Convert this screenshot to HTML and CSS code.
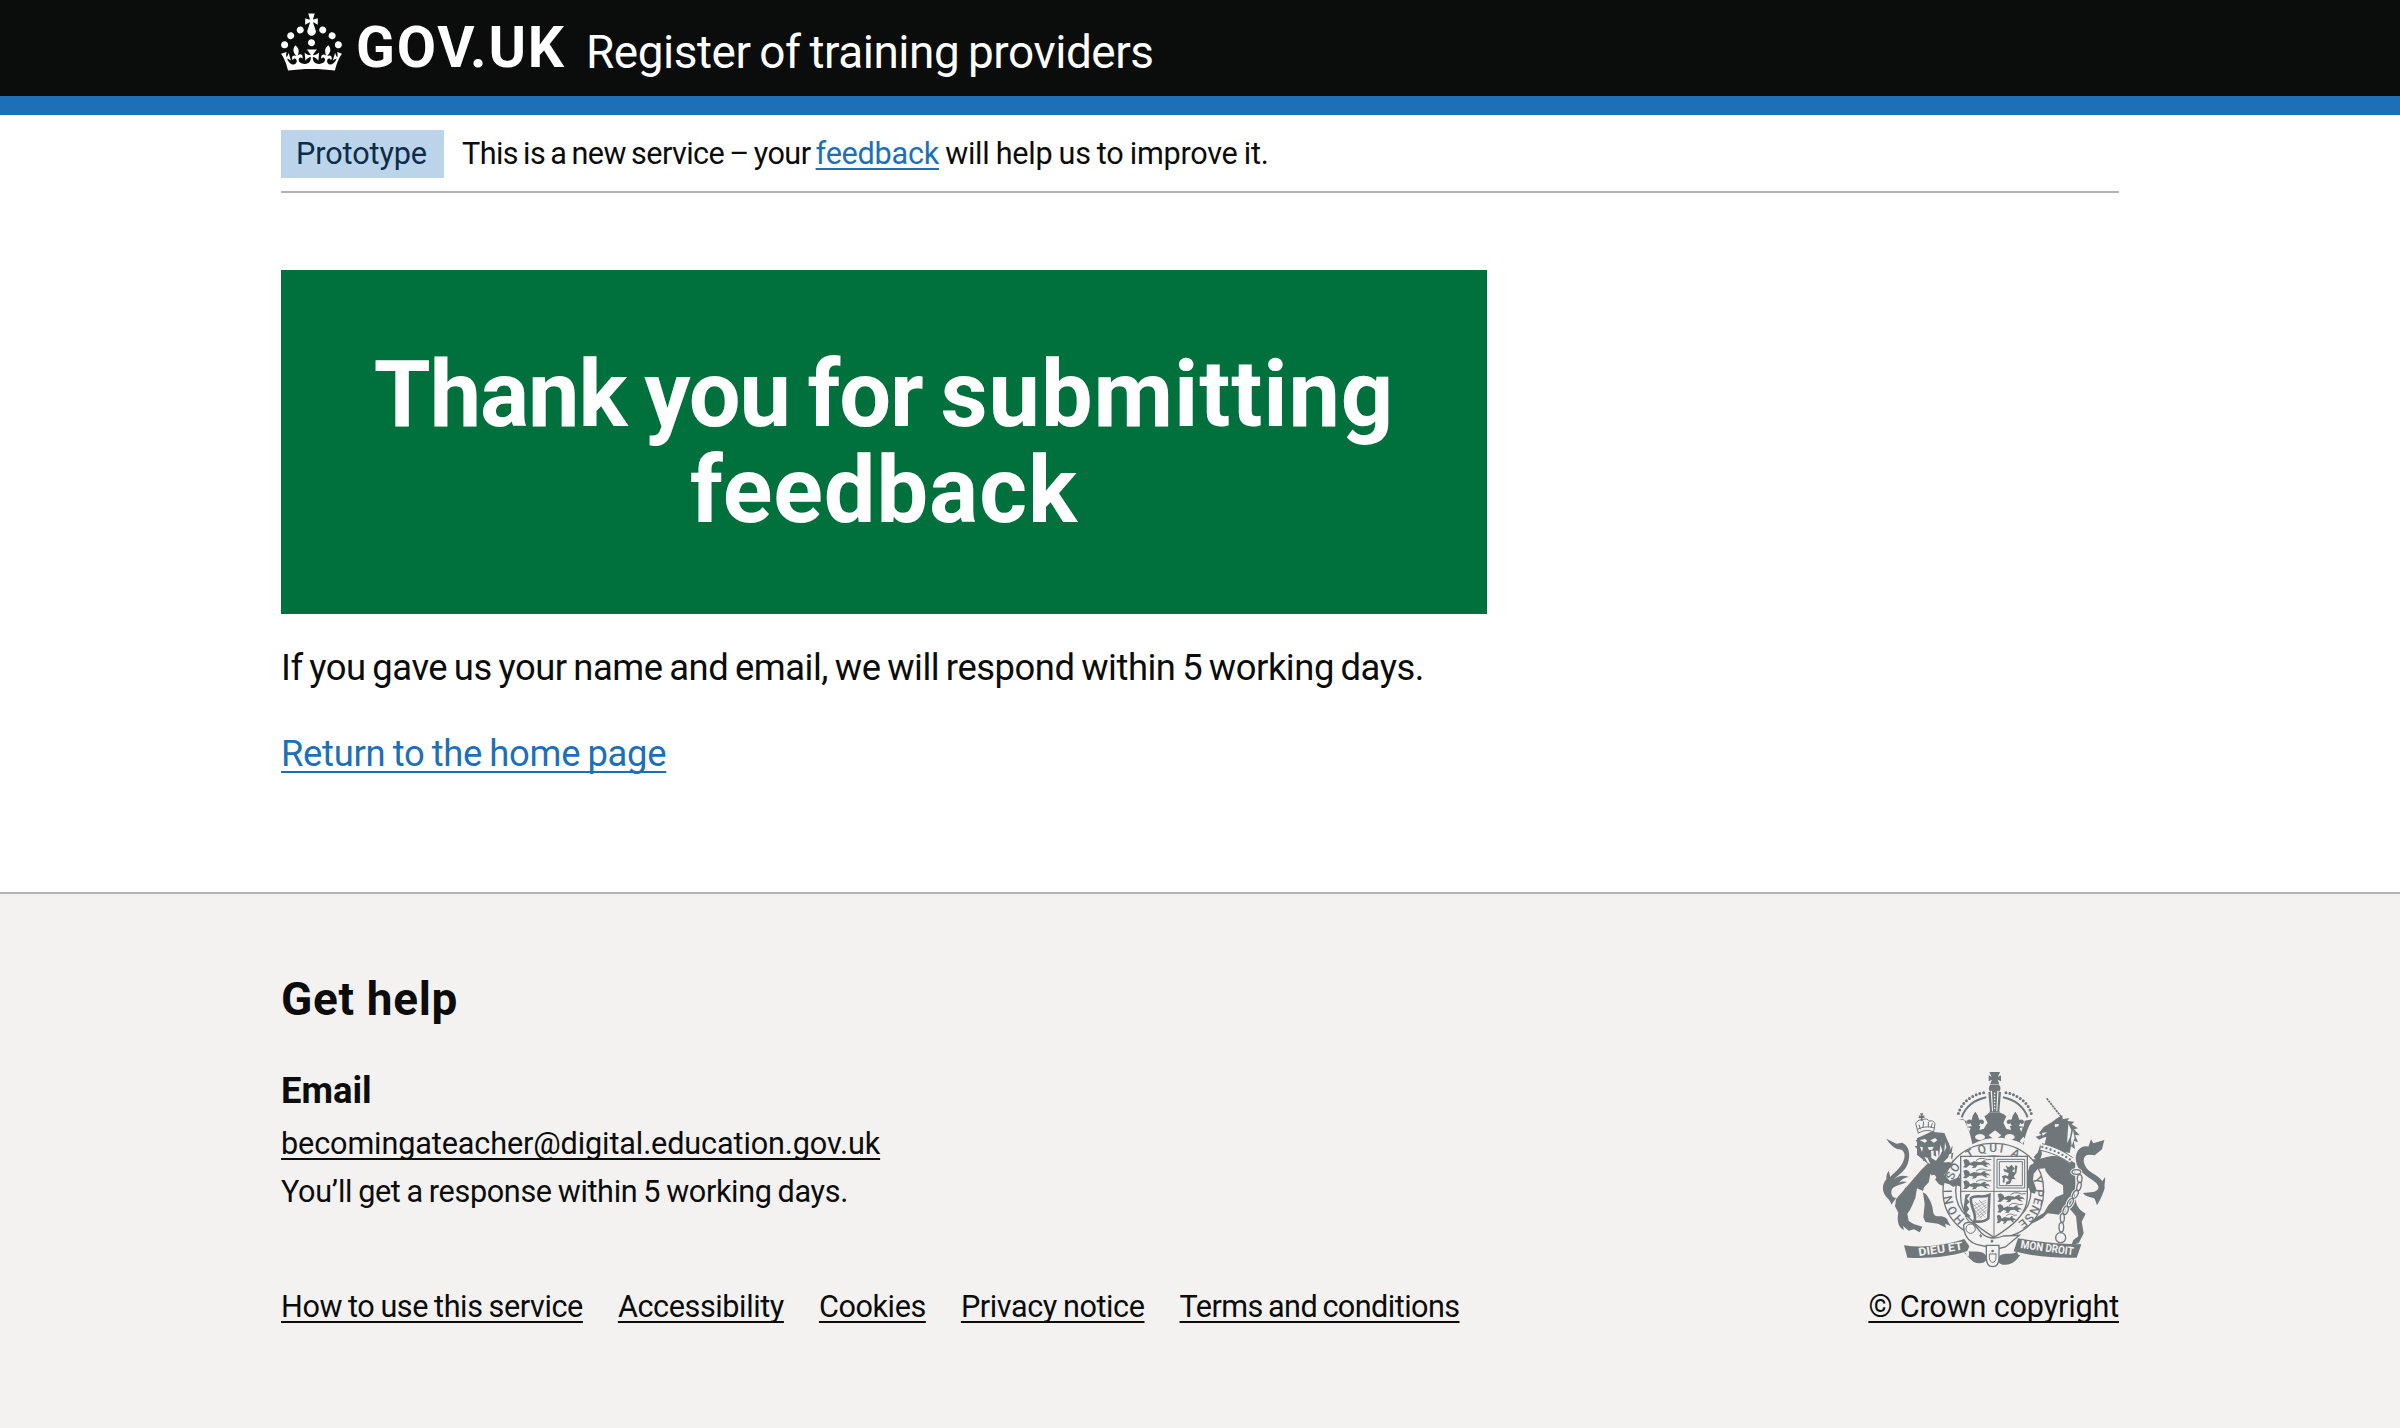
FILE: index.html
```html
<!DOCTYPE html>
<html lang="en">
<head>
<meta charset="utf-8">
<title>Thank you for submitting feedback – Register of training providers</title>
<link rel="stylesheet" href="styles.css">
</head>
<body>
<header class="header">
  <div class="container header__inner">
    <a class="header__logo" href="#">
      <svg class="header__crown" viewBox="0 0 32 30" aria-hidden="true">
        <path d="M22.6 10.4c-1 .4-2-.1-2.4-1-.4-.9.1-2 1-2.4.9-.4 2 .1 2.4 1s-.1 2-1 2.4m-5.9 6.7c-.9.4-2-.1-2.4-1-.4-.9.1-2 1-2.4.9-.4 2 .1 2.4 1s-.1 2-1 2.4m10.8-3.7c-1 .4-2-.1-2.4-1-.4-.9.1-2 1-2.4.9-.4 2 .1 2.4 1s0 2-1 2.4m3.3 4.8c-1 .4-2-.1-2.4-1-.4-.9.1-2 1-2.4.9-.4 2 .1 2.4 1s-.1 2-1 2.4M17 4.7l2.3 1.2V2.5l-2.3.7-.2-.2.9-3h-3.4l.9 3-.2.2c-.1.1-2.3-.7-2.3-.7v3.4L15 4.7c.1.1.1.2.2.2l-1.3 4c-.1.2-.1.4-.1.6 0 1.1.8 2 1.9 2.2h.7c1-.2 1.9-1.1 1.9-2.1 0-.2 0-.4-.1-.6l-1.3-4c-.1-.2 0-.2.1-.3m-7.6 5.7c.9.4 2-.1 2.4-1 .4-.9-.1-2-1-2.4-.9-.4-2 .1-2.4 1s0 2 1 2.4m-5 3c.9.4 2-.1 2.4-1 .4-.9-.1-2-1-2.4-.9-.4-2 .1-2.4 1s.1 2 1 2.4m-3.2 4.8c.9.4 2-.1 2.4-1 .4-.9-.1-2-1-2.4-.9-.4-2 .1-2.4 1s0 2 1 2.4m14.8 11c4.4 0 8.6.3 12.3.8 1.1-4.5 2.4-7 3.7-8.8l-2.5-.9c.2 1.3.3 1.9 0 2.7-.4-.4-.8-1.1-1.1-2.3l-1.2 4c.7-.5 1.3-.8 2-.9-1.1 2.5-2.6 3.1-3.5 3-1.1-.2-1.7-1.2-1.5-2.1.3-1.2 1.5-1.5 2.1-.1 1.1-2.3-.8-3-2-2.3 1.9-1.9 2.1-3.5.6-5.6-2.1 1.6-2.1 3.2-1.2 5.5-1.2-1.4-3.2-.6-2.5 1.6.9-1.4 2.1-.5 1.9.8-.2 1.1-1.7 2.1-3.5 1.9-2.7-.2-2.9-2.1-2.9-3.6.7-.1 1.9.5 2.9 1.9l.4-4.3c-1.1 1.1-2.1 1.4-3.2 1.4.4-1.2 2.1-3 2.1-3h-5.4s1.7 1.9 2.1 3c-1.1 0-2.1-.2-3.2-1.4l.4 4.3c1-1.4 2.2-2 2.9-1.9-.1 1.5-.2 3.4-2.9 3.6-1.9.2-3.4-.8-3.5-1.9-.2-1.3 1-2.2 1.9-.8.7-2.3-1.2-3-2.5-1.6.9-2.2.9-3.9-1.2-5.5-1.5 2-1.3 3.7.6 5.6-1.2-.7-3.1 0-2 2.3.6-1.4 1.8-1.1 2.1.1.2.9-.3 1.9-1.5 2.1-.9.2-2.4-.5-3.5-3 .6 0 1.2.3 2 .9l-1.2-4c-.3 1.1-.7 1.9-1.1 2.3-.3-.8-.2-1.4 0-2.7l-2.9.9C1.3 23 2.6 25.5 3.7 30c3.7-.5 7.9-.8 12.3-.8"/>
      </svg>
      <span class="header__wordmark">GOV.UK</span>
    </a>
    <a class="header__service" href="#">Register of training providers</a>
  </div>
</header>

<div class="container phase-banner">
  <strong class="phase-banner__tag">Prototype</strong>
  <span class="phase-banner__text">This is a new service – your <span class="phase-banner__action"><a class="link" href="#">feedback</a> will help us to improve it.</span></span>
</div>

<main class="container main">
  <div class="panel">
    <h1 class="panel__title">Thank you for <span class="panel__title-end">submitting feedback</span></h1>
  </div>
  <p class="body-text">If you gave us your name and email, we will respond within 5 working days.</p>
  <p class="body-text body-text--return"><a class="link link--return" href="#">Return to the home page</a></p>
</main>

<footer class="footer">
  <div class="container footer__inner">
    <div class="footer__content">
      <h2 class="footer__heading">Get help</h2>
      <h3 class="footer__subheading">Email</h3>
      <ul class="footer__contact">
        <li><a class="footer__link footer__link--email" href="#">becomingateacher@digital.education.gov.uk</a></li>
        <li>You’ll get a response within 5 working days.</li>
      </ul>
      <ul class="footer__nav">
        <li><a class="footer__link" href="#">How to use this service</a></li>
        <li><a class="footer__link" href="#">Accessibility</a></li>
        <li><a class="footer__link" href="#">Cookies</a></li>
        <li><a class="footer__link" href="#">Privacy notice</a></li>
        <li><a class="footer__link footer__link--terms" href="#">Terms and conditions</a></li>
      </ul>
    </div>
    <div class="footer__meta">
      <svg class="arms" viewBox="36 30 678 600" aria-hidden="true">
        <defs>
          <path id="motto" d="M373 510A125 117 0 0 1 248 393A125 117 0 0 1 373 276A125 117 0 0 1 498 393A125 117 0 0 1 373 510"/>
          <g id="passant">
            <path d="M2 3l9-3 8 5 3 7 12-5 20 3 10-6 8 2-6 3 12 3 6 8-7-4-8 2 9 7-10-2-10-6-14 2-5 7-12 1 6-6-12-3-10 8-10-1 5-6z"/>
            <path class="arms__line" d="M40 5c10-9 22-8 34-3l12-1"/>
          </g>
          <g id="fleur"><path d="M0-32c9 10 12 18 6 29 8-10 20-8 20 1 0 6-8 8-11 3-2 9-8 10-12 13v9h-6v-9c-4-3-10-4-12-13-3 5-11 3-11-3 0-9 12-11 20-1-6-11-3-19 6-29z"/></g>
          <g id="chain">
            <ellipse cx="622" cy="336" rx="13" ry="7"/><ellipse cx="632" cy="356" rx="7" ry="12"/><ellipse cx="630" cy="379" rx="6" ry="13" transform="rotate(14 630 379)"/><ellipse cx="619" cy="403" rx="7" ry="13" transform="rotate(30 619 403)"/><ellipse cx="604" cy="428" rx="7" ry="14" transform="rotate(28 604 428)"/><ellipse cx="590" cy="451" rx="7" ry="13" transform="rotate(20 590 451)"/><ellipse cx="580" cy="474" rx="6" ry="13"/><ellipse cx="577" cy="502" rx="7" ry="14"/><circle cx="575" cy="533" r="15"/>
          </g>
        </defs>

        <!-- royal crown -->
        <path d="M361 36h32l-6 15 9-5v18l-10-5 5 14h-28l6-14-10 5V46l9 5zM364 74c-6 6-6 15 0 22h26c6-7 6-16 0-22zM358 96h38l-5 58 4 4h-36l4-4z"/>
        <path class="arms__cut" d="M369 92l-4 0 4 62 3 0zM385 92l4 0-4 62-3 0z"/>
        <path class="arms__dots arms__dots--light" d="M377 100v54"/>
        <path class="arms__dots" d="M344 98c-42 8-70 34-77 68M411 98c42 8 70 34 77 68"/>
        <path class="arms__band" d="M352 112c-38 8-62 28-74 60M402 112c38 8 62 28 74 60"/>
        <path d="M268 178l24 4 3 18 16-2-4-17 12-26 13 26-5 16 20 2 9-10-10-20 12-8h44l10 8-9 20 9 10 19-2-5-16 13-26 13 26-4 17 16 2 3-18 24-4c-14 24-22 44-27 76-46-27-107-27-154-1-6-33-14-52-26-75z"/>
        <path d="M356 159h43l-12 15v18h-18v-18z"/>
        <use href="#fleur" x="319" y="188"/><use href="#fleur" x="439" y="188"/>
        <g class="arms__paper">
          <path d="M378 211l19 15-19 14-19-14zM292 230l11 13-8 9-9-14zM463 230l-11 13 8 9 9-14z"/>
          <ellipse cx="333" cy="231" rx="15" ry="9"/><ellipse cx="422" cy="231" rx="15" ry="9"/>
          <path d="M335 196l17-4-7 14-14 4zM422 196l-17-4 7 14 14 4zM296 202l9 3-5 11zM461 202l-9 3 5 11z"/>
        </g>

        <!-- lion supporter -->
        <path d="M52 236l30 15 18-3c20 9 26 36 16 64-8 22-30 34-42 47 14-14 31-14 46-8-15 1-22 9-31 18 12-7 19-5 24-2-21 9-46 11-46 29 0 14 9 19 15 17l-15 21c-1-12-13-18-21-32-8-17-4-32 6-44 0-12 2-21 8-26 0 10 4 14 3 19 18-18 37-31 43-57 3-12-2-24-14-26-15 0-28-14-40-32z"/>
        <path d="M109 385l48-56 26-25 65 4 5-30c-12 2-22 13-32 21l30-42-5 36 7 13-18 14-17 24 18 24 45-8 17 12-12 13-26-11-28 8-22-9-26-32-4 25-17 18c8 25 26 35 29 68 2 21 14 15 27 17 8 4 16 4 18 15l8 14-17-7 3 12-24-12-38-5-6-14 4-40-6-40-17-7-5 30c-10 21-15 37-24 46l4 22 15 9 26 8-8 17-17-9-16 4-17-14 3 12c-20-9-21-32-17-52l-10-19 3-21c11-16 24-21 32-45z"/>
        <path d="M144 235l42-20 40 4 18 42-6 31-20 20-16-5-22 8-14-13-22-18z"/>
        <path d="M140 240l10 16-13 3 12 13-4 14 16-2 2 20 14-8 10 18 10-20 14 10 4-17 14 8-2-20 14-2-8-14 8-9-13-6 2-14-14 2z"/>
        <g class="arms__paper">
          <path d="M152 240l16-3 7 6-8 5zM184 241l15-7 6 7-10 7zM176 262l18-2-4 9-10 1zM186 272h8v14l8 4-2-18h7l2 18-8 12-14-8zM162 262l-9-2 6 16zM166 290l10 4 8 18-8-4zM214 254l6 18-10 20zM228 246l4 16-6 14z"/>
          <path d="M207 346l-18 26-10-8 12-20zM160 396l4-8 10 6 34 6 3 18-30-10z"/>
        </g>
        <g class="arms__line">
          <path d="M148 220l-8-30c6-10 14-12 20-8 6-8 18-6 20 2 8-4 16 0 18 8l-4 24c-14-7-32-6-46 4zM144 209c16-9 34-11 52-5M150 194l4 14M164 184l-2 18M178 186v16M190 190l-4 14M158 162v20M149 172h17"/>
        </g>
        <path d="M153 160h10l-3 8 6-2v9l-6-2 2 8h-8l2-8-6 2v-9l6 2z"/>

        <!-- unicorn supporter -->
        <path class="arms__horn" d="M533 115l44 56"/>
        <path d="M510 219l14-18 25-15 16-12 15-8 1 12 20-4-6 9 21 2-8 8 19 12-12 3 17 18-14-1 9 22-13-5 4 25-12-8-4 20-13-2 5 14-68-33 6-27-10 2-12 6-10-9 17-5z"/>
        <g class="arms__paper"><path d="M557 193l13-1-2 7-10 3zM598 192l9 18-4 22-9 18 2-30zM612 210l5 24-9 24-2-20zM519 219l16-3-14 11z"/></g>
        <path d="M514 253l-7 24-13 14 16 18 9-28z"/>
        <path d="M525 293c34-11 65-4 94 17-2 32 1 49 0 68l-1 31c3 27 10 40 32 52l-12 24 6 35-15 30-22 5 6-15 15-11-3-22-4-38-31-37-1 26-18 6-35-4-15 14-18 10-18 8 9-15 31-19 13-22 22-24 23-10-1-26c-22-14-38-20-52-43l-4-17-38 2-9 14 11 32-2 20-16-1-5-28 1-38 15-18 30-3z"/>
        <path d="M706 240l-7 28-22 18-14-2c-18-1-24 14-14 34 10 22 38 25 51 46l8-13c2 13-3 20-1 34-8 25-13 33-23 51l-7-20c-11-6-25-4-35-17l31-3c19-5 20-18 5-30-23-18-53-31-57-63-4-28 14-49 37-43l8-22 7 12z"/>
        <path class="arms__collar" d="M516 260c25 6 63 20 92 42"/>
        <path class="arms__line" d="M519 251c30 6 62 20 92 42M515 271c28 6 58 18 88 38"/>
        <path class="arms__dots arms__dots--collar" d="M520 261c27 7 58 19 86 40"/>
        <use class="arms__chain arms__chain--halo" href="#chain"/>
        <use class="arms__chain" href="#chain"/>

        <!-- garter -->
        <path class="arms__garter" fill-rule="evenodd" d="M373 250c88 0 151 60 151 143s-63 142-151 142-151-60-151-142 63-143 151-143zM373 288c-65 0-113 45-113 105s48 104 113 104 113-45 113-104-48-105-113-105z"/>
        <g class="arms__motto">
          <text><textPath href="#motto" startOffset="92" textLength="102">HONI</textPath></text>
          <text><textPath href="#motto" startOffset="222" textLength="48">SO</textPath></text>
          <text><textPath href="#motto" startOffset="302">T</textPath></text>
          <text><textPath href="#motto" startOffset="336" textLength="72">QUI</textPath></text>
          <text><textPath href="#motto" startOffset="432">A</textPath></text>
          <text><textPath href="#motto" startOffset="530">Y</textPath></text>
          <text><textPath href="#motto" startOffset="564" textLength="118">PENSE</textPath></text>
        </g>

        <!-- forelimbs overlapping the garter -->
        <path d="M196 322l42-16 18 6-16 14-14 18 16 18 28-10 18 8 3 12-12-3-4 10-12-4-10 6-12-8-28-8-16-20z"/>
        <path d="M540 291l-36 12-22 14-8 26 2 32 8 22 14 4 4-14-10-28 2-18 12-14 38-4z"/>

        <!-- shield -->
        <path class="arms__shield" d="M275 289h200v121c0 52-44 88-100 122-56-34-100-70-100-122z"/>
        <path class="arms__line" d="M375 289v240M275 394h200"/>
        <use href="#passant" x="281" y="297"/><use href="#passant" x="281" y="329"/><use href="#passant" x="281" y="361"/>
        <use href="#passant" x="384" y="400"/><use href="#passant" transform="translate(384 432) scale(.9 1)"/><use href="#passant" transform="translate(382 464) scale(.72 1)"/>
        <path class="arms__line" d="M384 298h83v86h-83zM391 305h69v72h-69z"/>
        <path d="M410 316l9 6 9-8 9 12-8 8 12 6-7 10 6 8-11-1-6 14-13 3 2-8 9-5-10-8-8 5-5-9 11-4 8 4 2-9-14-6-2-8 12 3zM438 316l7 2-3 22-5-2zM403 348l5 1-2 20-5-3z"/>
        <path class="arms__harp" d="M306 414c16-12 32 2 55-9l-3 70c-10 10-26 11-42 9 10-20-14-44-10-70z"/>
        <path class="arms__strings" d="M312 438l39-17M314 448l39-22M316 458l37-24M320 466l33-24M324 472l29-22M328 477l24-19M318 426l32 34M312 432l36 40M330 420l22 24M316 448l22 28"/>
        <path d="M289 404l15-3-10 15 8 10-9 9 8 12-8 11 13 11-14 3 12 14c-15-5-20-25-20-45z"/>

        <!-- buckle and strap -->
        <path class="arms__strap" d="M284 495c8-12 26-10 33 0l20 24c21 19 42 19 66 9l48-2-42 35-25 6-62-14c-24-9-38-25-38-58z"/>
        <circle class="arms__line" cx="305" cy="506" r="14"/>
        <path d="M335 521l5 7-5 5-4-6zM369 538l5 5-5 6-5-5z"/>

        <!-- motto scroll -->
        <path d="M105 556c60 9 118 0 181-19l15 22-6 14c-64 21-126 22-180 20zM434 574l13-39c59 10 125 18 190 18l-14 40c-54 2-124-2-189-19z"/>
        <path d="M281 575c18 10 24 35 50 35 22 0 28-17 16-28-12-10-36-6-48-8 4 18-4 22-8 6M459 578c-12 14-24 40-58 36-18-3-18-22-6-29 18-8 36 2 50-11 0 14 8 14 14 4"/>
        <g class="arms__scroll-text">
          <text transform="translate(150 588) rotate(-8)" textLength="134" lengthAdjust="spacingAndGlyphs">DIEU ET</text>
          <text transform="translate(454 564) rotate(8)" textLength="160" lengthAdjust="spacingAndGlyphs">MON DROIT</text>
        </g>
        <path class="arms__shield" d="M352 556h38v36c0 20-6 28-19 28s-19-8-19-28z"/>
        <path class="arms__line" d="M361 592c0 20 20 20 20 0v-12M361 592v-10h20"/>
        <circle cx="371" cy="573" r="4"/>
      </svg>
      <a class="footer__link footer__link--copyright" href="#">© Crown copyright</a>
    </div>
  </div>
</footer>
</body>
</html>
```
FILE: styles.css
```css
* {
  box-sizing: border-box;
}

body {
  margin: 0;
  min-height: 1428px;
  display: flex;
  flex-direction: column;
  background: #fff;
  color: #0b0c0c;
  font-family: Roboto, "Liberation Sans", sans-serif;
}

h1, h2, h3, p, ul {
  margin: 0;
  padding: 0;
}

ul {
  list-style: none;
}

.container {
  width: 1838px;
  margin: 0 auto;
}

/* Header */

.header {
  background: #0b0c0c;
  border-bottom: 19px solid #1d70b8;
}

.header__inner {
  display: flex;
  align-items: flex-start;
  height: 96px;
}

.header__logo {
  display: flex;
  width: 305px;
  color: #fff;
  text-decoration: none;
}

.header__crown {
  width: 61px;
  height: 58px;
  margin-top: 13px;
  fill: currentColor;
}

.header__wordmark {
  margin: 18px 0 0 14px;
  font-size: 57px;
  font-weight: 700;
  line-height: 60px;
  letter-spacing: 1.8px;
}

.header__service {
  margin-top: 23px;
  color: #fff;
  font-size: 45.9px;
  line-height: 58px;
  letter-spacing: -0.45px;
  word-spacing: -2.1px;
  text-decoration: none;
}

/* Phase banner */

.phase-banner {
  display: flex;
  gap: 18px;
  padding: 15px 0 13px;
  border-bottom: 2px solid #b1b4b6;
  font-size: 30.6px;
}

.phase-banner__tag {
  width: 163px;
  height: 48px;
  padding: 0 15px;
  background: #bbd4ea;
  color: #0c2d4a;
  font-weight: 400;
  line-height: 48px;
  letter-spacing: -0.1px;
}

.phase-banner__text {
  line-height: 48px;
  letter-spacing: -0.6px;
  word-spacing: -1.8px;
}

.phase-banner__action {
  letter-spacing: -0.24px;
  word-spacing: -1.2px;
}

.link {
  color: #1d70b8;
  text-decoration: underline;
  text-decoration-thickness: 2px;
  text-underline-offset: 4px;
  text-decoration-skip-ink: none;
}

.link--return {
  text-underline-offset: 5px;
}

/* Main */

.main {
  padding-top: 77px;
}

.panel {
  width: 1206px;
  height: 344px;
  padding: 77px 77px 75px;
  background: #00703c;
  color: #fff;
  text-align: center;
}

.panel__title {
  font-size: 91.9px;
  font-weight: 700;
  line-height: 96px;
  letter-spacing: -1.1px;
  word-spacing: -4px;
}

.panel__title-end {
  letter-spacing: 0.9px;
}

.body-text {
  margin-top: 30px;
  font-size: 36.4px;
  line-height: 48px;
  letter-spacing: -0.46px;
  word-spacing: -1.9px;
}

.body-text--return {
  margin-top: 38px;
  letter-spacing: -0.3px;
  word-spacing: -1.4px;
}

/* Footer */

.footer {
  flex: 1;
  margin-top: 114px;
  border-top: 2px solid #b1b4b6;
  background: #f3f2f1;
}

.footer__inner {
  display: flex;
  justify-content: space-between;
  align-items: flex-end;
  padding-top: 76px;
  font-size: 30.6px;
  line-height: 48px;
}

.footer__heading {
  font-size: 45.9px;
  font-weight: 700;
  line-height: 58px;
  letter-spacing: 0.7px;
}

.footer__subheading {
  margin-top: 39px;
  font-size: 36.4px;
  font-weight: 700;
  line-height: 48px;
}

.footer__contact {
  margin-top: 5px;
  letter-spacing: -0.35px;
  word-spacing: -1.2px;
}

.footer__nav {
  display: flex;
  gap: 35px;
  margin-top: 67px;
}

.footer__link {
  color: inherit;
  letter-spacing: -0.4px;
  word-spacing: -1.2px;
  text-decoration: underline;
  text-decoration-thickness: 2px;
  text-underline-offset: 4px;
  text-decoration-skip-ink: none;
}

.footer__link--email {
  letter-spacing: -0.12px;
  word-spacing: 0;
}

.footer__link--terms {
  letter-spacing: -0.55px;
  word-spacing: -1.8px;
}

.footer__link--copyright {
  letter-spacing: -0.16px;
  word-spacing: 0;
}

.footer__meta {
  display: flex;
  flex-direction: column;
  align-items: center;
  gap: 13px;
}

/* Coat of arms */

.arms {
  width: 226px;
  height: 200px;
  fill: #6f777b;
}

.arms__paper,
.arms__cut {
  fill: #f3f2f1;
}

.arms__line,
.arms__chain,
.arms__strings,
.arms__band,
.arms__dots,
.arms__horn {
  fill: none;
  stroke: #6f777b;
  stroke-width: 3;
}

.arms__strings {
  stroke-width: 1.4;
}

.arms__chain {
  stroke-width: 4;
}

.arms__chain--halo {
  stroke: #f3f2f1;
  stroke-width: 10;
}

.arms__band {
  stroke-width: 6;
}

.arms__dots {
  stroke-width: 9;
  stroke-linecap: round;
  stroke-dasharray: 0 11.5;
}

.arms__dots--light {
  stroke: #f3f2f1;
  stroke-width: 5;
  stroke-dasharray: 0 9;
}

.arms__dots--collar {
  stroke-width: 7;
  stroke-dasharray: 0 13;
}

.arms__horn {
  stroke-width: 5;
  stroke-dasharray: 7 2;
}

.arms__collar {
  fill: none;
  stroke: #f3f2f1;
  stroke-width: 20;
}

.arms__garter,
.arms__shield,
.arms__strap {
  fill: #f3f2f1;
  stroke: #6f777b;
  stroke-width: 4;
}

.arms__harp {
  fill: #f3f2f1;
  stroke: #6f777b;
  stroke-width: 8;
}

.arms__motto {
  font-size: 36px;
  font-weight: 500;
}

.arms__scroll-text {
  fill: #f3f2f1;
  font-size: 34px;
  font-weight: 700;
}
```
